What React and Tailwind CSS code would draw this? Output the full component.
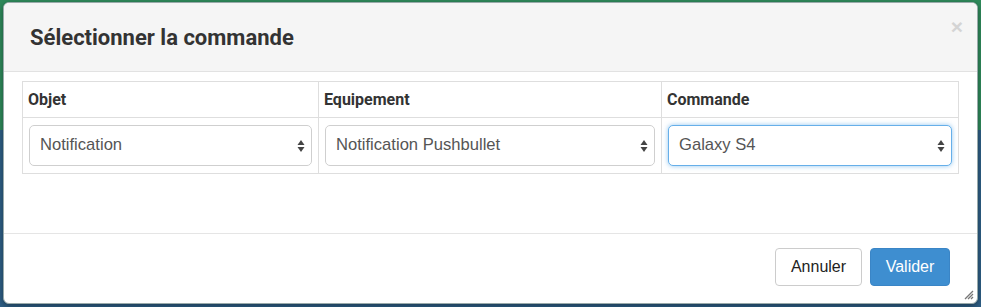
import React from 'react';

const SelectBox = ({ value, focused }) => (
  <div
    className={`relative h-[41px] rounded-[5px] bg-white flex items-center pl-[10px] pr-6 text-[16.6px] text-[#555] font-['Liberation_Sans',sans-serif] border
      ${focused ? 'border-[#66afe9] shadow-[0_0_5px_rgba(102,175,233,0.7)]' : 'border-[#cfcfcf]'}`}
  >
    <span>{value}</span>
    <svg className="absolute right-[6px] top-1/2 -translate-y-1/2" width="8" height="14" viewBox="0 0 8 14">
      <path d="M4 1 L7.5 6 L0.5 6 Z" fill="#444" />
      <path d="M4 13 L7.5 8 L0.5 8 Z" fill="#444" />
    </svg>
  </div>
);

export default function App() {
  return (
    <div className="w-[981px] h-[307px] overflow-hidden bg-[linear-gradient(to_bottom,#2f8a5b_0px,#2f8a5b_130px,#2e5f86_130px,#2e5f86_100%)] pt-[2px] pl-[3px] pr-[3px] pb-[3px]">
      <div className="relative h-[302px] w-[975px] bg-white rounded-[6px] border border-[#9aa] shadow-[0_2px_6px_rgba(0,0,0,0.4)] overflow-hidden flex flex-col">
        {/* header */}
        <div className="h-[69px] bg-[#f5f5f5] border-b border-[#e2e2e2] flex items-center pl-[26px] pr-[14px] justify-between">
          <h4 className="font-['Roboto',sans-serif] font-bold text-[22px] text-[#333] mt-[1px]">Sélectionner la commande</h4>
          <span className="font-['Liberation_Sans',sans-serif] font-bold text-[21px] leading-none text-[#d4d4d4] -mt-[22px]">×</span>
        </div>

        {/* body */}
        <div className="px-[18px] pt-[9px] h-[162px] border-b border-[#e5e5e5]">
          <table className="w-[937px] border-collapse font-['Roboto',sans-serif] text-[#333]">
            <thead>
              <tr className="h-[36px]">
                <th className="border border-[#dedede] text-left font-bold text-[16px] pl-[5px] w-[296px]">Objet</th>
                <th className="border border-[#dedede] text-left font-bold text-[16px] pl-[5px] w-[343px]">Equipement</th>
                <th className="border border-[#dedede] text-left font-bold text-[16px] pl-[5px]">Commande</th>
              </tr>
            </thead>
            <tbody>
              <tr className="h-[56px]">
                <td className="border border-[#dedede] px-[6px]">
                  <SelectBox value="Notification" />
                </td>
                <td className="border border-[#dedede] px-[6px]">
                  <SelectBox value="Notification Pushbullet" />
                </td>
                <td className="border border-[#dedede] px-[6px]">
                  <SelectBox value="Galaxy S4" focused />
                </td>
              </tr>
            </tbody>
          </table>
        </div>

        {/* footer */}
        <div className="flex-1 flex justify-end items-start pt-[14px] pr-[27px] gap-[8px] font-['Liberation_Sans',sans-serif] text-[16px]">
          <button className="h-[38px] w-[87px] rounded-[4px] border border-[#cccccc] bg-white text-[#222]">Annuler</button>
          <button className="h-[38px] w-[80px] rounded-[4px] border border-[#3a85c6] bg-[#3e8ed0] text-white">Valider</button>
        </div>

        {/* resize grip */}
        <svg className="absolute right-[3px] bottom-[3px]" width="10" height="10" viewBox="0 0 10 10">
          <path d="M9 1 L1 9 M9 4 L4 9 M9 7 L7 9" stroke="#777" strokeWidth="1.3" />
        </svg>
      </div>
    </div>
  );
}
